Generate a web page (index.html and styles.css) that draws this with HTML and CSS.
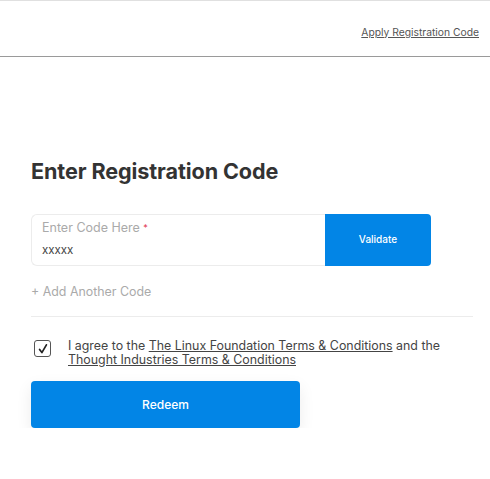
FILE: index.html
```html
<!DOCTYPE html>
<html>
<head>
<meta charset="utf-8">
<link rel="stylesheet" href="styles.css">
</head>
<body>
<header class="topbar">
  <a class="apply-link" href="#">Apply Registration Code</a>
</header>
<main class="content">
  <h1 class="title">Enter Registration Code</h1>
  <div class="code-row">
    <div class="code-field">
      <div class="field-label">Enter Code Here <span class="req">*</span></div>
      <div class="field-value">xxxxx</div>
    </div>
    <button class="validate-btn">Validate</button>
  </div>
  <div class="add-code">+ Add Another Code</div>
  <div class="divider"></div>
  <div class="agree-row">
    <span class="checkbox">
      <svg width="12" height="12" viewBox="0 0 12 12"><path d="M2.6 6.4 L4.9 9.6 L9.4 1.8" fill="none" stroke="#222" stroke-width="1.7" stroke-linecap="round" stroke-linejoin="round"/></svg>
    </span>
    <p class="agree-text">I agree to the <a href="#">The Linux Foundation Terms &amp; Conditions</a> and the <a href="#">Thought Industries Terms &amp; Conditions</a></p>
  </div>
  <button class="redeem-btn">Redeem</button>
</main>
</body>
</html>
```

FILE: styles.css
```css
html, body {
  margin: 0;
  padding: 0;
  background: #fff;
  font-family: Inter, "Noto Sans", sans-serif;
}
body {
  border-top: 1px solid #e0e0e0;
}
.topbar {
  height: 56px;
  border-bottom: 1px solid #9a9a9a;
  display: flex;
  align-items: center;
  justify-content: flex-end;
  padding-right: 11px;
  box-sizing: border-box;
}
.apply-link {
  font-size: 10.3px;
  color: #555;
  text-decoration: underline;
  text-underline-offset: 1px;
  margin-top: 6px;
}
.content {
  padding-left: 31px;
  width: 442px;
}
.title {
  margin: 102px 0 0;
  font-size: 21.6px;
  line-height: 25px;
  font-weight: 700;
  color: #333;
  letter-spacing: -0.1px;
}
.code-row {
  margin-top: 30px;
  display: flex;
  height: 52px;
}
.code-field {
  width: 294px;
  box-sizing: border-box;
  border: 1px solid #ececec;
  border-right: none;
  border-radius: 6px 0 0 6px;
  padding: 5px 10px 0;
}
.field-label {
  font-size: 12.5px;
  line-height: 16px;
  color: #aaa;
}
.req {
  color: #e0344a;
  font-size: 9px;
  vertical-align: 1px;
}
.field-value {
  margin-top: 7px;
  font-size: 11.5px;
  line-height: 14px;
  color: #444;
}
.validate-btn {
  width: 106px;
  border: none;
  background: #0285e6;
  color: #fff;
  border-radius: 0 4px 4px 0;
  font-family: inherit;
  font-size: 10px;
  font-weight: 500;
  padding: 0 0 2px;
}
.add-code {
  margin-top: 19px;
  font-size: 12.4px;
  line-height: 14px;
  color: #aaa;
}
.divider {
  margin-top: 17px;
  height: 1px;
  background: #ececec;
}
.agree-row {
  margin-top: 22px;
  display: flex;
  align-items: flex-start;
}
.checkbox {
  width: 15px;
  height: 15px;
  margin: 1px 0 0 3px;
  border: 1.5px solid #555;
  border-radius: 3px;
  display: flex;
  align-items: center;
  justify-content: center;
  flex: none;
}
.agree-text {
  margin: 0 0 0 17px;
  font-size: 12.4px;
  line-height: 14px;
  color: #444;
}
.agree-text a {
  color: #444;
  text-decoration: underline;
}
.redeem-btn {
  display: block;
  margin-top: 14px;
  width: 269px;
  height: 47px;
  border: none;
  border-radius: 4px;
  background: #0285e6;
  color: #fff;
  font-family: inherit;
  font-size: 12px;
  font-weight: 500;
  box-shadow: 0 6px 16px rgba(0,0,0,0.08);
}
```
